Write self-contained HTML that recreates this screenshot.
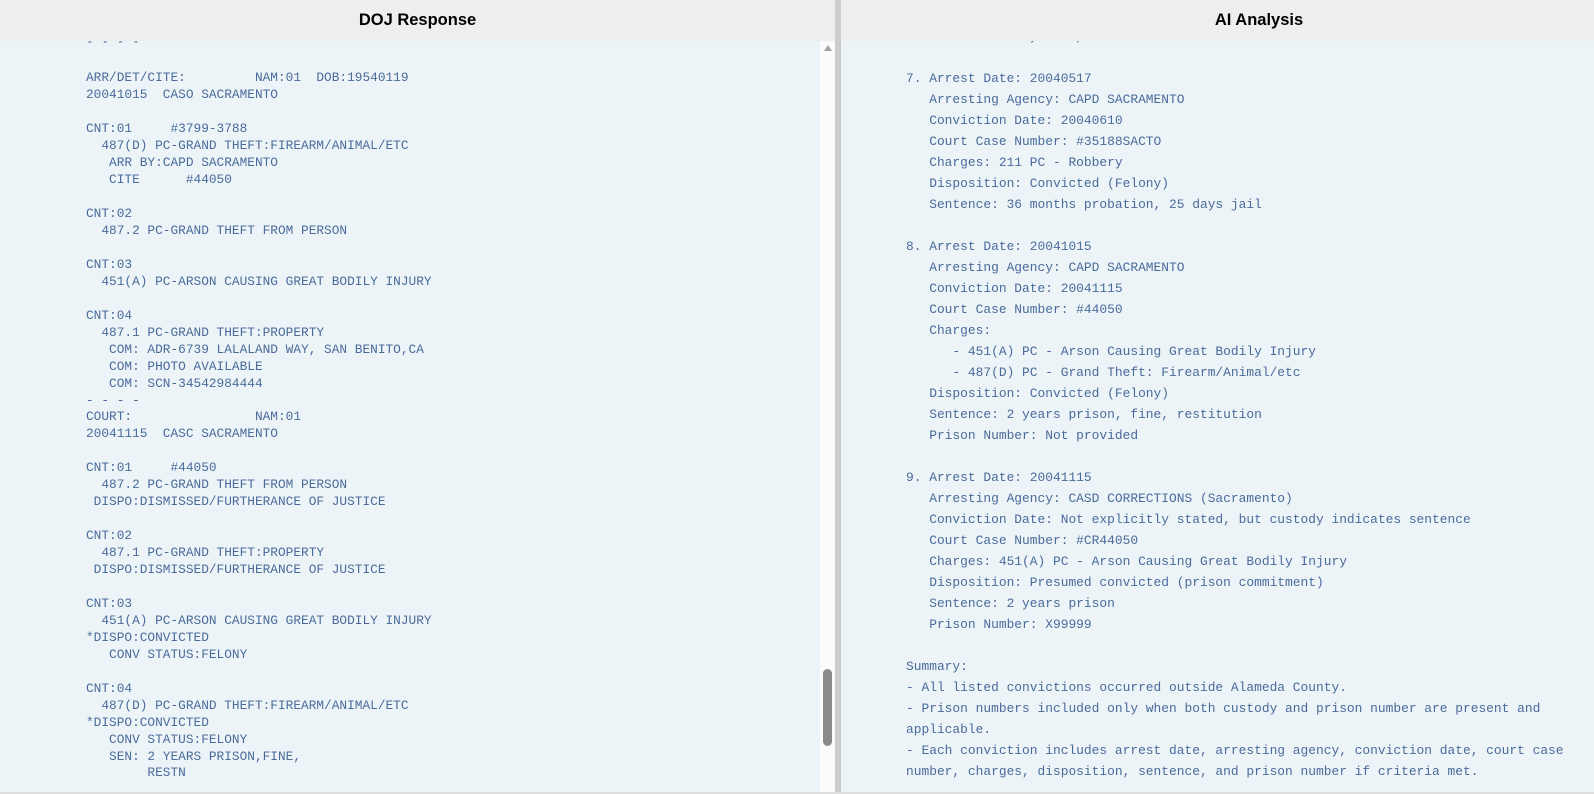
<!DOCTYPE html>
<html><head><style>
html,body{margin:0;padding:0;width:1594px;height:794px;overflow:hidden;background:#edf4f8;}
.hdr{position:absolute;top:0;height:41px;background:#eeeeee;font-family:"Liberation Sans",Arial,sans-serif;font-weight:bold;font-size:16.5px;color:#000;line-height:41px;text-align:center;z-index:2}
.pnl{position:absolute;top:41px;bottom:2px;overflow:hidden;background:#edf4f8}
pre{margin:0;position:absolute;font-family:"Liberation Mono","DejaVu Sans Mono",monospace;color:#4a6b9a;white-space:pre}
#l pre{left:86px;top:-4.5px;font-size:12.8px;line-height:16.95px}
#r pre{left:65px;top:-15px;font-size:12.9px;line-height:21px}
</style></head><body>
<div class="hdr" style="left:0;width:835px;">DOJ Response</div>
<div class="hdr" style="left:841px;width:836px;">AI Analysis</div>
<div style="position:absolute;left:835px;top:0;width:6px;height:794px;background:#cccccc;z-index:3"></div>
<div class="pnl" id="l" style="left:0;width:820px;"><pre>* * * *

ARR/DET/CITE:         NAM:01  DOB:19540119
20041015  CASO SACRAMENTO

CNT:01     #3799-3788
  487(D) PC-GRAND THEFT:FIREARM/ANIMAL/ETC
   ARR BY:CAPD SACRAMENTO
   CITE      #44050

CNT:02
  487.2 PC-GRAND THEFT FROM PERSON

CNT:03
  451(A) PC-ARSON CAUSING GREAT BODILY INJURY

CNT:04
  487.1 PC-GRAND THEFT:PROPERTY
   COM: ADR-6739 LALALAND WAY, SAN BENITO,CA
   COM: PHOTO AVAILABLE
   COM: SCN-34542984444
- - - -
COURT:                NAM:01
20041115  CASC SACRAMENTO

CNT:01     #44050
  487.2 PC-GRAND THEFT FROM PERSON
 DISPO:DISMISSED/FURTHERANCE OF JUSTICE

CNT:02
  487.1 PC-GRAND THEFT:PROPERTY
 DISPO:DISMISSED/FURTHERANCE OF JUSTICE

CNT:03
  451(A) PC-ARSON CAUSING GREAT BODILY INJURY
*DISPO:CONVICTED
   CONV STATUS:FELONY

CNT:04
  487(D) PC-GRAND THEFT:FIREARM/ANIMAL/ETC
*DISPO:CONVICTED
   CONV STATUS:FELONY
   SEN: 2 YEARS PRISON,FINE,
        RESTN
</pre></div>
<div style="position:absolute;left:820px;top:41px;width:15px;height:751px;background:#fbfbfb;z-index:2"></div>
<div style="position:absolute;left:824px;top:45px;width:0;height:0;border-left:4px solid transparent;border-right:4px solid transparent;border-bottom:6px solid #a3a3a3;z-index:3"></div>
<div style="position:absolute;left:823px;top:669px;width:9px;height:77px;background:#8a8a8a;border-radius:5px;z-index:3"></div>
<div class="pnl" id="r" style="left:841px;right:0;"><pre>   Sentence: 15 years prison

7. Arrest Date: 20040517
   Arresting Agency: CAPD SACRAMENTO
   Conviction Date: 20040610
   Court Case Number: #35188SACTO
   Charges: 211 PC - Robbery
   Disposition: Convicted (Felony)
   Sentence: 36 months probation, 25 days jail

8. Arrest Date: 20041015
   Arresting Agency: CAPD SACRAMENTO
   Conviction Date: 20041115
   Court Case Number: #44050
   Charges:
      - 451(A) PC - Arson Causing Great Bodily Injury
      - 487(D) PC - Grand Theft: Firearm/Animal/etc
   Disposition: Convicted (Felony)
   Sentence: 2 years prison, fine, restitution
   Prison Number: Not provided

9. Arrest Date: 20041115
   Arresting Agency: CASD CORRECTIONS (Sacramento)
   Conviction Date: Not explicitly stated, but custody indicates sentence
   Court Case Number: #CR44050
   Charges: 451(A) PC - Arson Causing Great Bodily Injury
   Disposition: Presumed convicted (prison commitment)
   Sentence: 2 years prison
   Prison Number: X99999

Summary:
- All listed convictions occurred outside Alameda County.
- Prison numbers included only when both custody and prison number are present and
applicable.
- Each conviction includes arrest date, arresting agency, conviction date, court case
number, charges, disposition, sentence, and prison number if criteria met.
</pre></div>
<div style="position:absolute;left:0;top:792px;width:1594px;height:2px;background:#dddddd;z-index:4"></div>
</body></html>
